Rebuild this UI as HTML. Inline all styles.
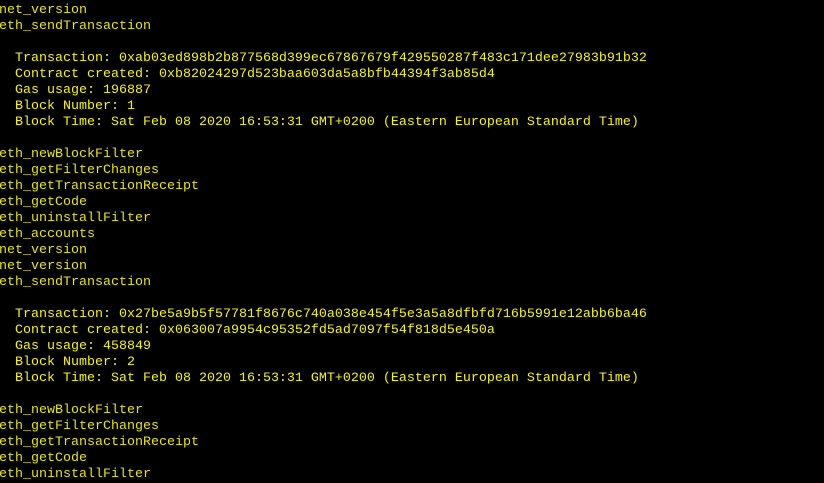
<!DOCTYPE html>
<html><head><style>
html,body{margin:0;background:#000;width:824px;height:477px;overflow:hidden}
pre{margin:0;position:absolute;left:-1px;top:3px;font-family:"Liberation Mono",monospace;font-size:13.33px;line-height:16px;color:#e6e600}
.t{color:#f5f500}
</style></head><body><pre>net_version
eth_sendTransaction

<span class="t">  Transaction: 0xab03ed898b2b877568d399ec67867679f429550287f483c171dee27983b91b32
  Contract created: 0xb82024297d523baa603da5a8bfb44394f3ab85d4
  Gas usage: 196887
  Block Number: 1
  Block Time: Sat Feb 08 2020 16:53:31 GMT+0200 (Eastern European Standard Time)</span>

eth_newBlockFilter
eth_getFilterChanges
eth_getTransactionReceipt
eth_getCode
eth_uninstallFilter
eth_accounts
net_version
net_version
eth_sendTransaction

<span class="t">  Transaction: 0x27be5a9b5f57781f8676c740a038e454f5e3a5a8dfbfd716b5991e12abb6ba46
  Contract created: 0x063007a9954c95352fd5ad7097f54f818d5e450a
  Gas usage: 458849
  Block Number: 2
  Block Time: Sat Feb 08 2020 16:53:31 GMT+0200 (Eastern European Standard Time)</span>

eth_newBlockFilter
eth_getFilterChanges
eth_getTransactionReceipt
eth_getCode
eth_uninstallFilter
</pre></body></html>
